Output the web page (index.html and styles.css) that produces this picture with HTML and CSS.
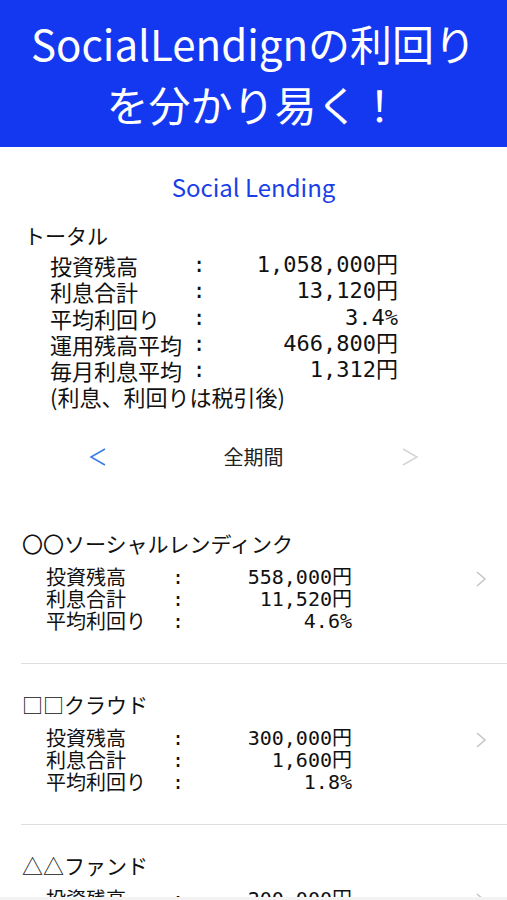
FILE: index.html
```html
<!DOCTYPE html>
<html lang="ja">
<head>
    <meta charset="UTF-8">
    <title>Social Lending</title>
    <link rel="stylesheet" href="styles.css">
</head>
<body>
    <!-- 上部バナー -->
    <header class="banner">
        <h1>SocialLendignの利回り<br>を分かり易く！</h1>
    </header>

    <main>
        <h2 class="app-title">Social Lending</h2>

        <!-- トータル -->
        <section class="total">
            <div class="total-head">トータル</div>
            <div class="row"><span class="label">投資残高</span><span class="colon">:</span><span class="value">1,058,000円</span></div>
            <div class="row"><span class="label">利息合計</span><span class="colon">:</span><span class="value">13,120円</span></div>
            <div class="row"><span class="label">平均利回り</span><span class="colon">:</span><span class="value">3.4%</span></div>
            <div class="row"><span class="label">運用残高平均</span><span class="colon">:</span><span class="value">466,800円</span></div>
            <div class="row"><span class="label">毎月利息平均</span><span class="colon">:</span><span class="value">1,312円</span></div>
            <div class="note">(利息、利回りは税引後)</div>
        </section>

        <!-- 期間切替 -->
        <nav class="period">
            <svg class="arrow" width="18" height="18" viewBox="0 0 18 18"><path d="M16 1 L2 9 L16 17" fill="none" stroke="#3d7ee6" stroke-width="1.6"/></svg>
            <span class="period-name">全期間</span>
            <svg class="arrow" width="18" height="18" viewBox="0 0 18 18"><path d="M2 1 L16 9 L2 17" fill="none" stroke="#d6d6d6" stroke-width="1.6"/></svg>
        </nav>

        <!-- 各サービス -->
        <ul class="providers">
            <li class="provider">
                <div class="provider-body">
                    <div class="provider-name">〇〇ソーシャルレンディンク</div>
                    <div class="prow"><span class="plabel">投資残高</span><span class="pcolon">:</span><span class="pvalue">558,000円</span></div>
                    <div class="prow"><span class="plabel">利息合計</span><span class="pcolon">:</span><span class="pvalue">11,520円</span></div>
                    <div class="prow"><span class="plabel">平均利回り</span><span class="pcolon">:</span><span class="pvalue">4.6%</span></div>
                </div>
                <svg class="chev" width="12" height="16" viewBox="0 0 12 16"><path d="M2 1 L10 8 L2 15" fill="none" stroke="#c6c6c6" stroke-width="1.6"/></svg>
            </li>
            <li class="provider">
                <div class="provider-body">
                    <div class="provider-name">□□クラウド</div>
                    <div class="prow"><span class="plabel">投資残高</span><span class="pcolon">:</span><span class="pvalue">300,000円</span></div>
                    <div class="prow"><span class="plabel">利息合計</span><span class="pcolon">:</span><span class="pvalue">1,600円</span></div>
                    <div class="prow"><span class="plabel">平均利回り</span><span class="pcolon">:</span><span class="pvalue">1.8%</span></div>
                </div>
                <svg class="chev" width="12" height="16" viewBox="0 0 12 16"><path d="M2 1 L10 8 L2 15" fill="none" stroke="#c6c6c6" stroke-width="1.6"/></svg>
            </li>
            <li class="provider">
                <div class="provider-body">
                    <div class="provider-name">△△ファンド</div>
                    <div class="prow"><span class="plabel">投資残高</span><span class="pcolon">:</span><span class="pvalue">200,000円</span></div>
                    <div class="prow"><span class="plabel">利息合計</span><span class="pcolon">:</span><span class="pvalue">0円</span></div>
                    <div class="prow"><span class="plabel">平均利回り</span><span class="pcolon">:</span><span class="pvalue">0.0%</span></div>
                </div>
                <svg class="chev" width="12" height="16" viewBox="0 0 12 16"><path d="M2 1 L10 8 L2 15" fill="none" stroke="#c6c6c6" stroke-width="1.6"/></svg>
            </li>
        </ul>
    </main>

    <div class="tabbar"></div>
</body>
</html>
```

FILE: styles.css
```css
body {
    margin: 0;
    background: #fff;
    color: #111;
    font-family: "Noto Sans CJK JP", sans-serif;
    overflow: hidden;
}
.banner {
    background-color: #1438f0;
    height: 147px;
    display: flex;
    align-items: center;
    justify-content: center;
}
.banner h1 {
    margin: 0;
    color: #fff;
    font-weight: normal;
    font-size: 42px;
    line-height: 61px;
    text-align: center;
    padding-bottom: 2px;
}
.app-title {
    margin: 25px 0 0;
    text-align: center;
    color: #1a3fe8;
    font-weight: normal;
    font-size: 24px;
    line-height: 30px;
}
.total {
    margin-top: 20px;
    padding-left: 24px;
    font-family: "DejaVu Sans Mono", "Noto Sans CJK JP", monospace;
}
.total-head {
    font-family: "Noto Sans CJK JP", sans-serif;
    font-size: 21px;
    line-height: 26px;
    margin-bottom: 4px;
}
.row, .note {
    display: flex;
    margin-left: 26px;
    font-size: 22px;
    line-height: 26.3px;
    height: 26.3px;
}
.label {
    width: 142px;
    font-family: "Noto Sans CJK JP", sans-serif;
}
.colon {
    width: 14px;
    text-align: center;
}
.value {
    width: 192px;
    text-align: right;
}
.note {
    font-family: "Noto Sans CJK JP", sans-serif;
}
.period {
    margin-top: 32px;
    display: flex;
    align-items: center;
    justify-content: center;
    height: 30px;
}
.period-name {
    width: 294px;
    text-align: center;
    font-family: "Noto Sans CJK JP", sans-serif;
    font-size: 20px;
    color: #222;
}
.arrow {
    display: block;
}
.providers {
    list-style: none;
    margin: 58px 0 0;
    padding: 0 0 0 21px;
}
.provider {
    display: flex;
    border-bottom: 1px solid #dedede;
    padding-bottom: 31px;
    margin-bottom: 27px;
}
.provider-body {
    flex: 1;
}
.provider-name {
    font-size: 21px;
    line-height: 26px;
    margin-left: 1px;
    margin-bottom: 10px;
}
.prow {
    display: flex;
    margin-left: 25px;
    font-family: "DejaVu Sans Mono", "Noto Sans CJK JP", monospace;
    font-size: 20px;
    line-height: 22px;
    height: 22px;
}
.plabel {
    width: 126px;
    font-family: "Noto Sans CJK JP", sans-serif;
}
.pcolon {
    width: 12px;
    text-align: center;
}
.pvalue {
    width: 168px;
    text-align: right;
}
.chev {
    align-self: flex-start;
    margin: 41px 20px 0 0;
    display: block;
}
.tabbar {
    position: fixed;
    left: 0;
    right: 0;
    bottom: 0;
    height: 3px;
    background: #f3f3f3;
}
```
